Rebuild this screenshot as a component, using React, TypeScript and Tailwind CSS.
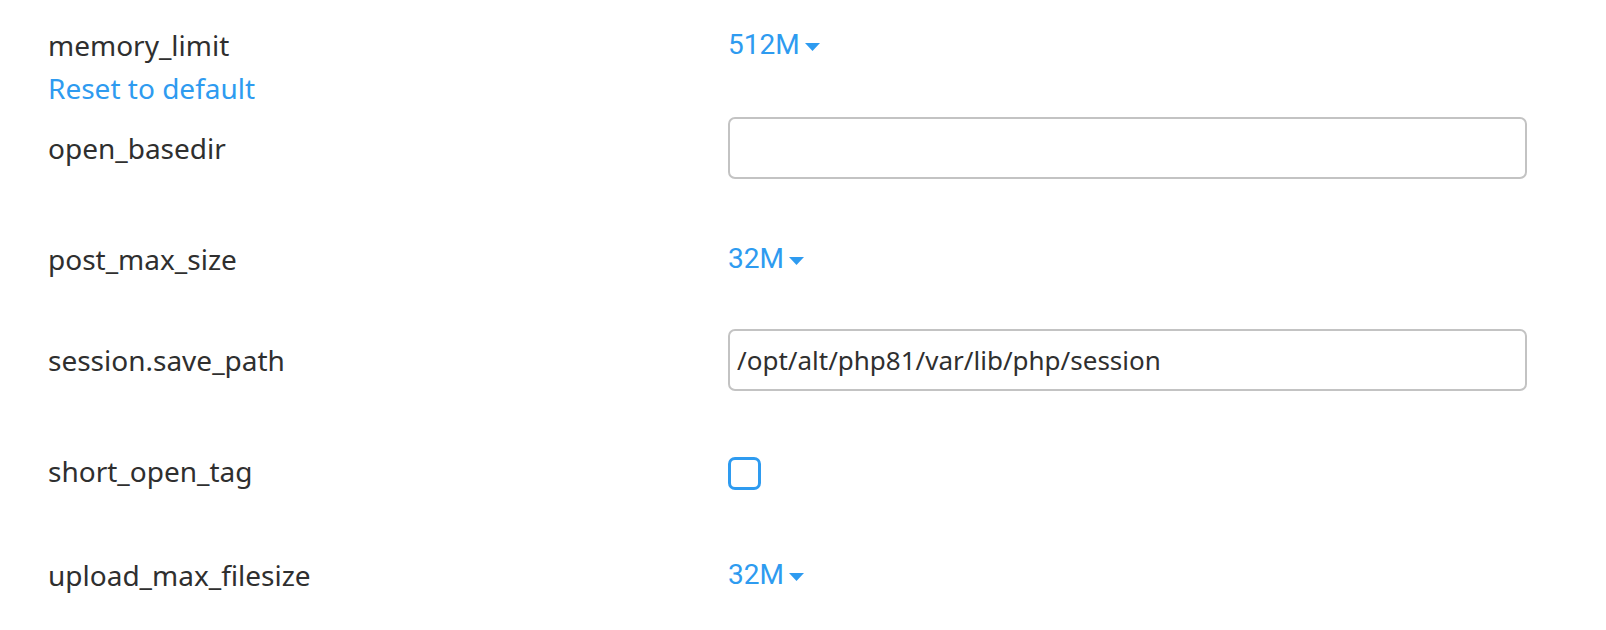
import React from 'react';

const label = "font-['Noto_Sans',sans-serif] text-[28px] leading-[40px] text-[#2f2f2f]";
const link = "font-['Roboto',sans-serif] text-[28px] leading-[40px] text-[#2e9bf0]";

function Caret() {
  return (
    <svg width="15" height="8" viewBox="0 0 15 8" className="ml-[5px] mt-[3px]">
      <path d="M0 0 L15 0 L7.5 8 Z" fill="#2e9bf0" />
    </svg>
  );
}

function SizeSelect({ value }: { value: string }) {
  return (
    <button className={`${link} flex items-center`}>
      {value}
      <Caret />
    </button>
  );
}

function TextField({ value }: { value?: string }) {
  return (
    <input
      type="text"
      defaultValue={value}
      className="w-[799px] h-[62px] border-2 border-[#c3c3c3] rounded-[7px] px-[7px] font-['Noto_Sans',sans-serif] text-[26px] text-[#2f2f2f] outline-none bg-white"
    />
  );
}

export default function App() {
  return (
    <div className="w-[1606px] h-[630px] bg-white pl-12 pt-[25px] overflow-hidden">
      {/* memory_limit */}
      <div className="flex items-start">
        <div className="w-[680px]">
          <div className={label}>memory_limit</div>
          <a className="block font-['Noto_Sans',sans-serif] text-[28px] leading-[46px] text-[#2e9bf0] cursor-pointer">Reset to default</a>
        </div>
        <SizeSelect value="512M" />
      </div>

      {/* open_basedir */}
      <div className="flex items-center h-[62px] mt-[6px]">
        <div className={`${label} w-[680px]`}>open_basedir</div>
        <TextField />
      </div>

      {/* post_max_size */}
      <div className="flex items-center h-[62px] mt-[49px]">
        <div className={`${label} w-[680px]`}>post_max_size</div>
        <SizeSelect value="32M" />
      </div>

      {/* session.save_path */}
      <div className="flex items-center h-[62px] mt-[39px]">
        <div className={`${label} w-[680px]`}>session.save_path</div>
        <TextField value="/opt/alt/php81/var/lib/php/session" />
      </div>

      {/* short_open_tag */}
      <div className="flex items-center h-[62px] mt-[49px]">
        <div className={`${label} w-[680px]`}>short_open_tag</div>
        <div className="w-[33px] h-[33px] border-[3px] border-[#2e9bf0] rounded-[7px] mt-[4px]" />
      </div>

      {/* upload_max_filesize */}
      <div className="flex items-center h-[62px] mt-[42px]">
        <div className={`${label} w-[680px]`}>upload_max_filesize</div>
        <SizeSelect value="32M" />
      </div>
    </div>
  );
}
